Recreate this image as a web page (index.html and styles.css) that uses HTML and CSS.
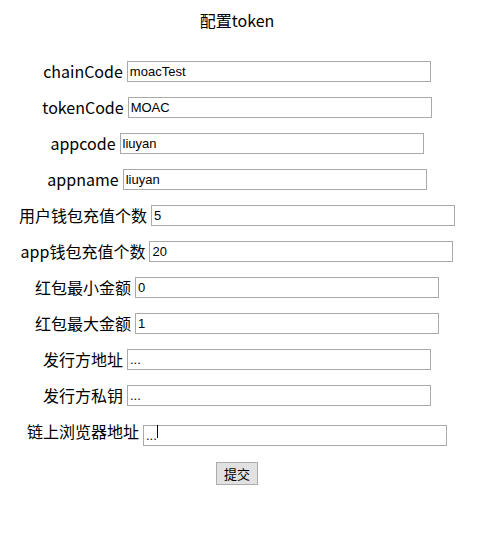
FILE: index.html
```html
<!DOCTYPE html>
<html>
<head>
<meta charset="utf-8">
<link rel="stylesheet" href="styles.css">
</head>
<body>
<div class="page">
  <h1 class="title">配置token</h1>
  <form class="form">
    <div class="row"><label>chainCode</label><input class="field" type="text" value="moacTest"></div>
    <div class="row"><label>tokenCode</label><input class="field" type="text" value="MOAC"></div>
    <div class="row"><label>appcode</label><input class="field" type="text" value="liuyan"></div>
    <div class="row"><label>appname</label><input class="field" type="text" value="liuyan"></div>
    <div class="row"><label>用户钱包充值个数</label><input class="field" type="text" value="5"></div>
    <div class="row"><label>app钱包充值个数</label><input class="field" type="text" value="20"></div>
    <div class="row"><label>红包最小金额</label><input class="field" type="text" value="0"></div>
    <div class="row"><label>红包最大金额</label><input class="field" type="text" value="1"></div>
    <div class="row"><label>发行方地址</label><input class="field" type="text" value="..."></div>
    <div class="row"><label>发行方私钥</label><input class="field" type="text" value="..."></div>
    <div class="row"><label>链上浏览器地址</label><span class="wrap"><input class="field" type="text" value="..."><span class="caret"></span></span></div>
    <div class="actions"><button class="submit" type="button">提交</button></div>
  </form>
</div>
</body>
</html>
```
FILE: styles.css
```css
html, body {
  margin: 0;
  padding: 0;
  background: #fff;
}
.page {
  width: 474px;
  font-family: "Noto Sans CJK SC", "Liberation Sans", sans-serif;
  color: #000;
}
.title {
  margin: 0;
  padding-top: 10px;
  height: 20px;
  line-height: 20px;
  font-size: 16px;
  font-weight: normal;
  text-align: center;
}
.form {
  margin: 23px 0 0;
  display: flex;
  flex-direction: column;
}
.row {
  height: 36px;
  display: flex;
  justify-content: center;
  align-items: center;
  gap: 4px;
}
.row label {
  font-size: 16px;
  line-height: 20px;
  white-space: nowrap;
}
.field {
  box-sizing: border-box;
  width: 304px;
  height: 21px;
  margin: 0;
  padding: 0 2px;
  border: 1px solid #a9a9a9;
  font-family: "Liberation Sans", sans-serif;
  font-size: 13px;
  color: #000;
  outline: none;
}
.wrap {
  position: relative;
  display: block;
  height: 21px;
}
.caret {
  position: absolute;
  left: 14px;
  top: 4px;
  width: 1px;
  height: 13px;
  background: #000;
}
.actions {
  display: flex;
  justify-content: center;
  margin-top: 13px;
}
.submit {
  box-sizing: border-box;
  width: 42px;
  height: 23px;
  padding: 0;
  border: 1px solid #adadad;
  background: #e1e1e1;
  font-family: "Noto Sans CJK SC", sans-serif;
  font-size: 13px;
  color: #000;
}
```
